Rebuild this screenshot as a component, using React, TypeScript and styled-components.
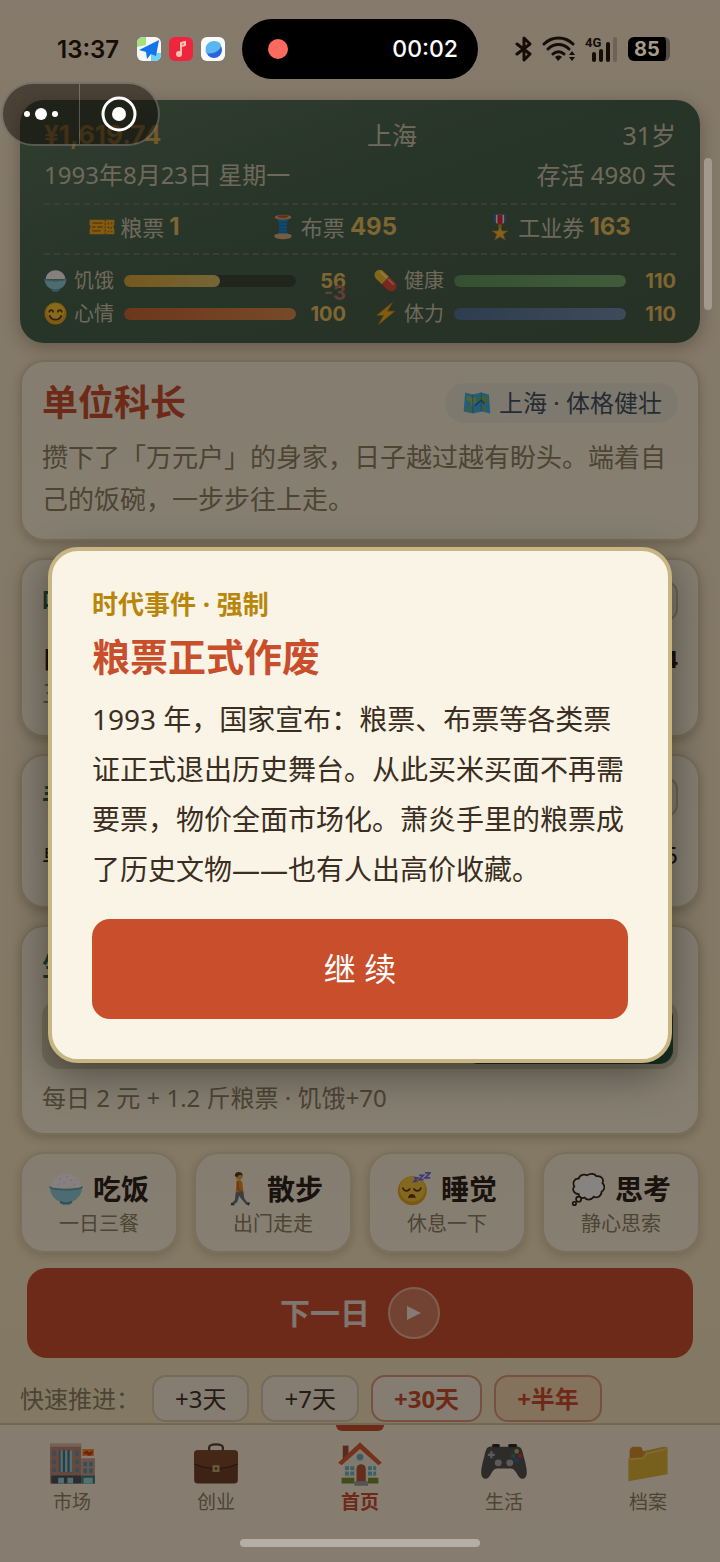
import React from 'react';
import styled, { createGlobalStyle } from 'styled-components';

const GlobalStyle = createGlobalStyle`
    * {
        box-sizing: border-box;
    }
    body {
        margin: 0;
        background: #efdcb8;
        color: #2e2118;
        font-family: 'Noto Sans', 'Noto Sans CJK SC', sans-serif;
        font-size: 24px;
    }
    button {
        font-family: inherit;
        color: inherit;
        cursor: pointer;
    }
    h1, h2, h3, p {
        margin: 0;
    }
`;

/* ---------- icons ---------- */

type IconName =
    | 'ticket' | 'spool' | 'medal' | 'rice' | 'smile' | 'pill' | 'bolt' | 'map'
    | 'walk' | 'sleep' | 'thought' | 'store' | 'case' | 'house' | 'pad' | 'folder';

const drawings: Record<IconName, React.ReactNode> = {
    ticket: (
        <>
            <path d="M1 9h38v8c-2 1-2 5 0 6v8H1v-8c2-1 2-5 0-6z" fill="#f0a51f" />
            <path d="M5 14h16M5 20h5M13 20h8M5 26h13" stroke="#9b6515" strokeWidth="2" />
            <path d="M25 9v22" stroke="#9b6515" strokeWidth="2" strokeDasharray="3 2" />
            <path d="M30 13v3M35 13v3M30 19v3M34 20v3M30 26v2M35 26v2" stroke="#9b6515" strokeWidth="2" />
        </>
    ),
    spool: (
        <>
            <path d="M11 8h18l-3 6v12l3 7H11l3-7V14z" fill="#2287c4" />
            <path d="M13 13h14M13 18h14M13 23h14M13 28h14" stroke="#17679c" strokeWidth="1" />
            <ellipse cx="20" cy="5" rx="13" ry="4" fill="#d99b66" />
            <ellipse cx="20" cy="4" rx="8" ry="2" fill="#b5543a" />
            <path d="M7 33c0-4 26-4 26 0v2c0 5-26 5-26 0z" fill="#d7a878" />
        </>
    ),
    medal: (
        <>
            <path d="M11 1h18v11l-9 5-9-5z" fill="#3b72b8" />
            <path d="M14 1h12v13l-6 3-6-3z" fill="#f2e8e0" />
            <path d="M16 1h8v14l-4 2-4-2z" fill="#d32f3c" />
            <circle cx="20" cy="19" r="3" fill="#c48b2c" />
            <path d="M20 18l3 8h9l-7 5 3 9-8-5-8 5 3-9-7-5h9z" fill="#f0b13a" stroke="#bf8120" strokeWidth="1" />
        </>
    ),
    rice: (
        <>
            <path d="M3 18C3 7 13 2 20 2s17 5 17 16z" fill="#f4ecea" />
            <path d="M12 8l2 1M20 5l2 1M25 10l2-1M17 12l2 1M29 15l2-1M10 15l2-1M31 9l1 1" stroke="#c6b8b6" strokeWidth="1" />
            <path d="M1 17c0 4 38 4 38 0 0 9-5 15-12 18v2c-3 3-11 3-14 0v-2C6 32 1 26 1 17z" fill="#8cc5cf" />
            <path d="M1 17c0 5 38 5 38 0" fill="none" stroke="#5da2b0" strokeWidth="2" />
            <path d="M13 35c4 2 10 2 14 0" fill="none" stroke="#4c8d9d" strokeWidth="2" />
        </>
    ),
    smile: (
        <>
            <circle cx="20" cy="20" r="19" fill="#e9a51e" />
            <circle cx="20" cy="17" r="15" fill="#f7c331" />
            <path d="M9 17c1-4 6-4 7 0M24 17c1-4 6-4 7 0M10 24c4 9 16 9 20 0" fill="none" stroke="#623813" strokeWidth="3" strokeLinecap="round" />
        </>
    ),
    pill: (
        <g transform="rotate(44 20 20)">
            <path d="M20 11H6a9 9 0 0 0 0 18h14z" fill="#f1bb32" />
            <path d="M20 11h14a9 9 0 0 1 0 18H20z" fill="#df4a37" />
            <path d="M4 15h14" stroke="#fae48e" strokeWidth="3" strokeLinecap="round" />
            <path d="M23 15h11" stroke="#f59a87" strokeWidth="3" strokeLinecap="round" />
        </g>
    ),
    bolt: <path d="M32 1L5 23h12L8 39l28-23H23z" fill="#f3a71e" stroke="#d48616" strokeWidth="1" />,
    map: (
        <>
            <path d="M3 5l11 3 12-3 11 3 2 27-12-3-13 3-13-3z" fill="#46a9d8" />
            <path d="M6 9l7 4 5-2 1 7-6 8-3-8-5-2z" fill="#92bd57" />
            <path d="M24 9l11 3 1 7-7 3-4-4-4 2zM26 25l7 1v5l-5-1zM5 28l6-2 3 5-8 1z" fill="#78af4b" />
            <path d="M14 8v26M26 5v27" stroke="#2b76a8" strokeWidth="1" />
            <path d="M17 24l9-8 5 5" fill="none" stroke="#2f5fbb" strokeWidth="2" />
        </>
    ),
    walk: (
        <>
            <circle cx="19" cy="5" r="4" fill="#d99b35" />
            <path d="M14 5c-1-7 10-6 9-1-2-1-5-1-6 2z" fill="#5b3b23" />
            <path d="M16 10c5-2 7 1 7 5l1 9-9 1z" fill="#e68323" />
            <path d="M15 24l9-1 1 8 5 7-2 1-7-8-2-3-2 7-5 4-2-2 4-4z" fill="#68717c" />
            <path d="M17 12l1 8 4 4" fill="none" stroke="#bf6818" strokeWidth="2" />
            <path d="M10 36l4 3H9zM28 36l4 0-2 4z" fill="#3d434a" />
        </>
    ),
    sleep: (
        <>
            <circle cx="18" cy="22" r="17" fill="#dfa323" />
            <circle cx="18" cy="20" r="15" fill="#f0bd35" />
            <path d="M7 19c1 4 6 4 8 1M20 20c2 3 7 3 8-1" fill="none" stroke="#623813" strokeWidth="2" strokeLinecap="round" />
            <path d="M13 31c0-7 9-7 9 0-2-1-7-1-9 0z" fill="#623813" />
            <path d="M20 7h4l-4 4h4M26 4h5l-5 5h5M33 1h6l-6 6h6" fill="none" stroke="#6a6ce0" strokeWidth="2" />
        </>
    ),
    thought: (
        <g fill="#f5efeb" stroke="#332318" strokeWidth="2">
            <path d="M9 26c-6 0-8-6-5-9-3-5 1-10 5-9 1-5 7-6 10-4 4-3 9-2 11 1 6-1 9 4 7 8 4 4 2 9-1 10 0 6-6 8-9 6-4 5-9 4-11 1-4 2-7-1-7-4z" />
            <circle cx="9" cy="32" r="3" />
            <circle cx="4" cy="37" r="2" />
        </g>
    ),
    store: (
        <>
            <path d="M1 3h27v34H1z" fill="#b98372" />
            <path d="M1 2h27v3H1z" fill="#d6b49d" />
            <path d="M9 8h11v19H9z" fill="#536c79" />
            <path d="M11 8v19M15 8v19M19 8v19" stroke="#9acbd0" strokeWidth="2" />
            <path d="M3 9h3v4H3zM3 16h3v4H3zM3 23h3v4H3zM23 9h3v4h-3zM23 16h3v4h-3zM23 23h3v4h-3z" fill="#698c9d" />
            <path d="M2 30h26v7H2z" fill="#4d5357" />
            <path d="M8 32h5v5H8zM16 32h5v5h-5z" fill="#94cad0" />
            <path d="M28 15h12v22H28z" fill="#c79785" />
            <path d="M30 18h3v4h-3zM35 18h3v4h-3zM30 24h3v4h-3zM35 24h3v4h-3z" fill="#4f94aa" />
            <path d="M29 7h10v6H29z" fill="#ee8e20" />
            <path d="M30 10l3-2 2 2 3-2v3l-3 2-3-2-2 1z" fill="#d73928" />
            <path d="M28 30h12v7H28z" fill="#477b77" />
            <path d="M30 32h8v5h-8z" fill="#91d0d0" />
        </>
    ),
    case: (
        <>
            <path d="M14 9V6c0-4 12-4 12 0v3" fill="none" stroke="#594536" strokeWidth="2" />
            <rect x="1" y="8" width="38" height="29" rx="3" fill="#704028" />
            <path d="M1 11c0-2 1-3 3-3h32c2 0 3 1 3 3v9c-12 6-26 6-38 0z" fill="#7e472b" />
            <path d="M1 20c12 5 26 5 38 0" fill="none" stroke="#482514" strokeWidth="1" />
            <path d="M17 21h6v6h-6z" fill="#c4a466" />
            <path d="M19 23h2v2h-2z" fill="#5c3921" />
        </>
    ),
    house: (
        <>
            <path d="M5 4h5v13H5z" fill="#9c4f36" />
            <path d="M6 19L21 6l13 13v17H6z" fill="#e9dfc9" />
            <path d="M20 1L1 19l3 2L20 7l16 14 3-2z" fill="#d45c33" />
            <circle cx="20" cy="14" r="3" fill="#73a5b5" />
            <path d="M17 36V24c0-5 8-5 8 0v12z" fill="#b95434" />
            <path d="M7 22h8v8H7zM27 22h7v8h-7z" fill="#6aafbd" />
            <path d="M11 22v8M7 26h8M31 22v8M27 26h7" stroke="#f3e9d8" strokeWidth="1" />
            <path d="M4 32h11v5H4zM27 32h9v5h-9z" fill="#758b2f" />
            <path d="M15 35h12v4H15z" fill="#9b9a9a" />
        </>
    ),
    pad: (
        <>
            <path d="M10 5h20c5-1 6 3 7 8 2 7 4 15 2 18-3 4-6 1-8-3-2-3-3-4-6-4H15c-3 0-4 1-6 4-2 4-5 7-8 3-2-3 0-11 2-18 1-5 2-9 7-8z" fill="#55504f" />
            <path d="M11 4h4M25 4h5" stroke="#2c2929" strokeWidth="3" strokeLinecap="round" />
            <path d="M9 9v6M6 12h6" stroke="#aaa4a1" strokeWidth="2" />
            <circle cx="15" cy="19" r="3" fill="#a9a29e" />
            <circle cx="25" cy="19" r="3" fill="#a9a29e" />
            <circle cx="31" cy="9" r="2" fill="#b3af5c" />
            <circle cx="34" cy="13" r="2" fill="#c13a3a" />
            <circle cx="28" cy="13" r="2" fill="#258370" />
            <circle cx="31" cy="17" r="2" fill="#37639c" />
        </>
    ),
    folder: (
        <>
            <path d="M4 10c0-3 1-5 4-5h5c2 0 2 3 3 4l18-4v8L4 35z" fill="#d28b2d" />
            <path d="M3 15l12-1 3-5 17-4c2 0 2 1 2 2v22L3 35z" fill="#d9ad38" />
            <path d="M4 16l12-1 3-4 17-4" fill="none" stroke="#f0cb64" strokeWidth="1" />
        </>
    ),
};

const Svg = styled.svg<{ $size: number }>`
    display: block;
    flex: none;
    width: ${(p) => p.$size}px;
    height: ${(p) => p.$size}px;
`;

const Icon = ({ name, size }: { name: IconName, size: number }) => (
    <Svg $size={size} viewBox="0 0 40 40" aria-hidden="true">{drawings[name]}</Svg>
);

/* ---------- phone chrome ---------- */

const StatusBar = () => (
    <StatusRow>
        <StatusSide>
            <Clock>13:37</Clock>
            <Svg $size={24} viewBox="0 0 24 24" aria-hidden="true">
                <rect width="24" height="24" rx="6" fill="#f5f7f6" />
                <path d="M0 10V6a6 6 0 0 1 6-6h3v8z" fill="#a4e07f" />
                <path d="M14 16h10v2a6 6 0 0 1-6 6h-4z" fill="#70d2f4" />
                <path d="M22 3L2 13l7 2 1 7 4-5 5 2z" fill="#1375e8" />
            </Svg>
            <Svg $size={24} viewBox="0 0 24 24" aria-hidden="true">
                <rect width="24" height="24" rx="6" fill="#ef2540" />
                <path d="M12 17V6l4-1v3l-3 1" fill="none" stroke="#fbc5ad" strokeWidth="2" />
                <circle cx="10" cy="17" r="3" fill="#fbc5ad" />
            </Svg>
            <Svg $size={24} viewBox="0 0 24 24" aria-hidden="true">
                <rect width="24" height="24" rx="6" fill="#fafafa" />
                <circle cx="13" cy="13" r="8" fill="#2865dd" />
                <path d="M5 16C3 8 8 4 13 4c5 0 7 3 7 5-1 5-9 9-15 7z" fill="#59b7ef" />
            </Svg>
        </StatusSide>
        <Island>
            <RecordDot />
            <span>00:02</span>
        </Island>
        <StatusSide $end>
            <svg width="18" height="26" viewBox="0 0 18 26" aria-hidden="true">
                <path d="M2 8l13 10-6 6V2l6 6L2 18" fill="none" stroke="#150d06" strokeWidth="3" strokeLinejoin="round" strokeLinecap="round" />
            </svg>
            <svg width="34" height="26" viewBox="0 0 34 26" aria-hidden="true">
                <g fill="none" stroke="#150d06" strokeWidth="3" strokeLinecap="round">
                    <path d="M2 8c8-8 21-8 29 0M6 13c6-6 15-6 21 0M11 18c3-3 8-3 11 0" />
                </g>
                <path d="M13 21c2-2 5-2 7 0l-4 4z" fill="#150d06" />
                <path d="M27 19l3-4 3 4zM27 21h6l-3 4z" fill="#150d06" />
            </svg>
            <svg width="34" height="26" viewBox="0 0 34 26" aria-hidden="true">
                <text x="0" y="11" fontSize="13" fontWeight="700" fontFamily="Roboto, sans-serif" fill="#150d06">4G</text>
                <path d="M9 18v6M16 15v9M23 8v16" stroke="#150d06" strokeWidth="4" strokeLinecap="round" />
                <path d="M30 3v21" stroke="#6d6253" strokeWidth="4" strokeLinecap="round" />
            </svg>
            <Battery>85</Battery>
        </StatusSide>
    </StatusRow>
);

const StatusRow = styled.header`
    position: relative;
    z-index: 3;
    display: grid;
    grid-template-columns: 1fr 236px 1fr;
    align-items: center;
    height: 100px;
    padding: 0 50px 2px;
`;

const StatusSide = styled.div<{ $end?: boolean }>`
    display: flex;
    align-items: center;
    justify-content: ${(p) => (p.$end ? 'flex-end' : 'flex-start')};
    gap: ${(p) => (p.$end ? 9 : 8)}px;
`;

const Clock = styled.time`
    margin: 0 10px 0 7px;
    color: #150d06;
    font: 600 24px Inter, sans-serif;
`;

const Island = styled.div`
    display: flex;
    align-items: center;
    justify-content: space-between;
    height: 60px;
    padding: 0 20px 0 26px;
    border-radius: 30px;
    background: #000;
    color: #fff;
    font: 500 23px Inter, sans-serif;
`;

const RecordDot = styled.i`
    width: 20px;
    height: 20px;
    border-radius: 50%;
    background: #ff6a5f;
`;

const Battery = styled.span`
    width: 42px;
    border-radius: 6px;
    border-right: 4px solid #564c40;
    background: #000;
    color: #a79c8a;
    font: 700 20px/24px Inter, sans-serif;
    text-align: center;
`;

const Capsule = styled.div`
    position: absolute;
    z-index: 3;
    top: 82px;
    left: 1px;
    display: grid;
    grid-template-columns: 76px 1fr;
    width: 159px;
    height: 64px;
    border: 2px solid rgba(255, 255, 255, 0.25);
    border-radius: 32px;
    background: rgba(15, 8, 4, 0.5);
`;

const CapsuleButton = styled.button`
    display: grid;
    place-items: center;
    padding: 0;
    border: 0;
    background: none;

    & + & {
        border-left: 1px solid rgba(255, 255, 255, 0.25);
    }
`;

const ScrollThumb = styled.i`
    position: absolute;
    z-index: 3;
    top: 158px;
    right: 8px;
    width: 8px;
    height: 152px;
    border-radius: 4px;
    background: #a3998d;
`;

const HomeBar = styled.i`
    position: relative;
    z-index: 3;
    align-self: center;
    width: 240px;
    height: 8px;
    margin-bottom: 15px;
    border-radius: 4px;
    background: #b4aea5;
`;

/* ---------- page ---------- */

const Page = styled.div`
    position: relative;
    display: flex;
    flex-direction: column;
    min-height: 100vh;
    background: linear-gradient(#f2dfc3, #efdbb3);
`;

const Content = styled.main`
    display: flex;
    flex: 1;
    flex-direction: column;
    gap: 17px;
    padding: 0 20px;
`;

const Summary = styled.section`
    padding: 15px 24px 13px;
    border-radius: 24px;
    background: linear-gradient(160deg, #587157, #48604a 45%, #475b44);
    box-shadow: 0 4px 18px rgba(60, 40, 20, 0.35);
    color: #c9c0a6;
`;

const SummaryRow = styled.div<{ $size: number }>`
    display: flex;
    align-items: center;
    justify-content: space-between;
    height: 40px;
    font-size: ${(p) => p.$size}px;
    line-height: 40px;
    white-space: nowrap;
`;

const Money = styled.strong`
    color: #d6a14a;
    font-family: Inter, sans-serif;
    font-size: 26px;
`;

const Tickets = styled.div`
    display: flex;
    justify-content: space-around;
    height: 52px;
    margin-top: 8px;
    padding-bottom: 4px;
    border: dashed #69765b;
    border-width: 2px 0;
`;

const Ticket = styled.div`
    display: flex;
    align-items: center;
    gap: 5px;
    font-size: 22px;
    line-height: 32px;
`;

const Amount = styled.strong`
    color: #e6ba5c;
    font-family: Inter, sans-serif;
    font-size: 24px;
`;

const Stats = styled.div`
    display: grid;
    grid-template-columns: 1fr 1fr;
    gap: 0 28px;
    padding-top: 9px;
`;

const Stat = styled.div`
    display: grid;
    grid-template-columns: 24px 40px 1fr 40px;
    align-items: center;
    gap: 6px;
    height: 33px;
    font-size: 20px;
    line-height: 32px;
`;

const Meter = styled.div`
    height: 12px;
    margin: 0 4px;
    border-radius: 6px;
    background: #3d4536;
`;

const MeterFill = styled.div<{ $from: string, $to: string }>`
    height: 100%;
    border-radius: 6px;
    background: linear-gradient(90deg, ${(p) => p.$from}, ${(p) => p.$to});
`;

const StatValue = styled.strong`
    position: relative;
    color: #e6ba5c;
    font-family: Inter, sans-serif;
    font-size: 20px;
    text-align: right;
`;

const Delta = styled.span`
    position: absolute;
    top: 12px;
    right: 0;
    color: #b8705f;
`;

const Card = styled.section<{ $min?: number }>`
    min-height: ${(p) => p.$min || 0}px;
    padding: 20px 20px 18px;
    border: 2px solid #d8c6a2;
    border-radius: 24px;
    background: linear-gradient(#f2e3cd, #f5e7ce);
    box-shadow: 0 3px 10px rgba(80, 55, 20, 0.25);
`;

const CardHead = styled.div`
    display: flex;
    align-items: center;
    justify-content: space-between;
    height: 42px;
`;

const Rank = styled.h1`
    color: #c84e2c;
    font-size: 36px;
    line-height: 40px;
`;

const Place = styled.span`
    display: flex;
    align-items: center;
    gap: 8px;
    padding: 0 16px 0 18px;
    border-radius: 20px;
    background: #e5dccb;
    color: #45505d;
    line-height: 40px;
`;

const Story = styled.p`
    padding: 12px 0 1px;
    color: #8c7c60;
    font-size: 26px;
    line-height: 42px;
`;

const CardTitle = styled.h2`
    color: #2f6349;
    font-size: 26px;
    line-height: 38px;
`;

const SmallButton = styled.button`
    height: 40px;
    padding: 0 16px;
    border: 2px solid #c5b492;
    border-radius: 12px;
    background: #eadbc3;
    font-size: 22px;
`;

const Line = styled.div<{ $bold?: boolean }>`
    display: flex;
    justify-content: space-between;
    padding-top: 20px;
    font-size: 24px;
    font-weight: ${(p) => (p.$bold ? 700 : 400)};
    line-height: 34px;
`;

const Muted = styled.p`
    color: #8c7c60;
    font-size: 24px;
    line-height: 34px;
`;

const Segments = styled.div`
    display: grid;
    grid-template-columns: repeat(3, 1fr);
    height: 70px;
    margin: 14px 0 12px;
    padding: 5px;
    border-radius: 18px;
    background: #d5c7a9;
`;

const Segment = styled.button<{ $on?: boolean }>`
    border: 0;
    border-radius: 14px;
    background: ${(p) => (p.$on ? '#2f5a42' : 'none')};
    color: ${(p) => (p.$on ? '#fff' : 'inherit')};
    font-size: 24px;
`;

const Actions = styled.div`
    display: grid;
    grid-template-columns: repeat(4, 1fr);
    gap: 16px;
`;

const Action = styled.button`
    height: 101px;
    padding: 2px 0 0;
    border: 2px solid #dccba8;
    border-radius: 24px;
    background: linear-gradient(#f2e3cd, #f5e7cf);
    box-shadow: 0 3px 8px rgba(80, 55, 20, 0.2);
`;

const ActionName = styled.span`
    display: flex;
    align-items: center;
    justify-content: center;
    gap: 10px;
    font-size: 28px;
    font-weight: 700;
    line-height: 40px;
`;

const ActionHint = styled.span`
    display: block;
    color: #8c7c60;
    font-size: 20px;
    line-height: 30px;
`;

const NextDay = styled.button`
    display: flex;
    align-items: center;
    justify-content: center;
    gap: 18px;
    height: 90px;
    margin: -2px 7px 0;
    border: 0;
    border-radius: 20px;
    background: #c84e2c;
    color: #e8d8cb;
    font-size: 30px;
    font-weight: 700;
    line-height: 44px;
`;

const PlayRing = styled.span`
    display: grid;
    place-items: center;
    width: 52px;
    height: 52px;
    border: 2px solid #e5ac94;
    border-radius: 50%;
    background: #d0785b;
`;

const Quick = styled.div`
    display: flex;
    align-items: center;
    gap: 12px;
    color: #8c7c60;
    line-height: 47px;
`;

const QuickLabel = styled.span`
    width: 120px;
    white-space: nowrap;
`;

const Chip = styled.button<{ $hot?: boolean, $filled?: boolean }>`
    height: 47px;
    padding: 0 21px;
    border: 2px solid ${(p) => (p.$hot ? '#d99377' : '#d3c3a4')};
    border-radius: 14px;
    background: ${(p) => (p.$filled ? '#f2d0aa' : '#f2e3d0')};
    color: ${(p) => (p.$hot ? '#c84e2c' : '#423426')};
    font-size: 24px;
    font-weight: ${(p) => (p.$hot ? 700 : 400)};
    line-height: 40px;
`;

const Shell = styled.footer`
    display: flex;
    flex-direction: column;
    background: #f4e3cd;
`;

const TabBar = styled.nav`
    display: grid;
    grid-template-columns: repeat(5, 1fr);
    height: 116px;
    border-top: 2px solid #d0bd98;
`;

const Tab = styled.a<{ $on?: boolean }>`
    display: flex;
    flex-direction: column;
    align-items: center;
    color: ${(p) => (p.$on ? '#c84e2c' : '#8c7c60')};
    font-size: 19px;
    font-weight: ${(p) => (p.$on ? 700 : 400)};
    line-height: 30px;
    text-decoration: none;

    &::before {
        content: '';
        width: 48px;
        height: 6px;
        margin-bottom: 10px;
        border-radius: 0 0 6px 6px;
        background: ${(p) => (p.$on ? '#c84e2c' : 'none')};
    }
`;

/* ---------- modal ---------- */

const Backdrop = styled.div`
    position: absolute;
    z-index: 2;
    inset: 0;
    display: flex;
    align-items: center;
    padding: 48px 48px 0;
    background: rgba(0, 0, 0, 0.45);
`;

const Dialog = styled.div`
    flex: 1;
    padding: 35px 40px 40px;
    border: 4px solid #c7b682;
    border-radius: 30px;
    background: #faf4e6;
    box-shadow: 0 12px 40px rgba(0, 0, 0, 0.4);
`;

const Kicker = styled.p`
    color: #b8860b;
    font-size: 26px;
    font-weight: 700;
    line-height: 36px;
`;

const EventTitle = styled.h2`
    padding: 6px 0 10px;
    color: #c84e2c;
    font-size: 38px;
    line-height: 56px;
`;

const EventText = styled.p`
    color: #3a2e22;
    font-size: 28px;
    line-height: 50px;
`;

const Continue = styled.button`
    display: block;
    width: 100%;
    height: 100px;
    margin-top: 25px;
    border: 0;
    border-radius: 18px;
    background: #c84e2c;
    color: #fff;
    font-size: 32px;
    line-height: 48px;
`;

const stats: { icon: IconName, name: string, value: number, from: string, to: string, delta?: string }[] = [
    { icon: 'rice', name: '饥饿', value: 56, from: '#d4a336', to: '#d8b862', delta: '-3' },
    { icon: 'pill', name: '健康', value: 110, from: '#62925a', to: '#78a86c' },
    { icon: 'smile', name: '心情', value: 100, from: '#c86434', to: '#d8874a' },
    { icon: 'bolt', name: '体力', value: 110, from: '#556f92', to: '#7088a6' },
];

const tickets: { icon: IconName, name: string, count: number }[] = [
    { icon: 'ticket', name: '粮票', count: 1 },
    { icon: 'spool', name: '布票', count: 495 },
    { icon: 'medal', name: '工业券', count: 163 },
];

const actions: { icon: IconName, name: string, hint: string }[] = [
    { icon: 'rice', name: '吃饭', hint: '一日三餐' },
    { icon: 'walk', name: '散步', hint: '出门走走' },
    { icon: 'sleep', name: '睡觉', hint: '休息一下' },
    { icon: 'thought', name: '思考', hint: '静心思索' },
];

const tabs: { icon: IconName, name: string }[] = [
    { icon: 'store', name: '市场' },
    { icon: 'case', name: '创业' },
    { icon: 'house', name: '首页' },
    { icon: 'pad', name: '生活' },
    { icon: 'folder', name: '档案' },
];

const App = () => (
    <Page>
        <GlobalStyle />
        <StatusBar />
        <Capsule>
            <CapsuleButton aria-label="更多">
                <svg width="36" height="14" viewBox="0 0 36 14" fill="#fff">
                    <circle cx="4" cy="7" r="3" />
                    <circle cx="18" cy="7" r="6" />
                    <circle cx="32" cy="7" r="3" />
                </svg>
            </CapsuleButton>
            <CapsuleButton aria-label="关闭">
                <svg width="36" height="36" viewBox="0 0 36 36" fill="#fff">
                    <circle cx="18" cy="18" r="16" fill="none" stroke="#fff" strokeWidth="3" />
                    <circle cx="18" cy="18" r="7" />
                </svg>
            </CapsuleButton>
        </Capsule>
        <ScrollThumb />
        <Content>
            <Summary>
                <SummaryRow $size={25}>
                    <Money>¥1,619.74</Money>
                    <span>上海</span>
                    <span>31岁</span>
                </SummaryRow>
                <SummaryRow $size={24}>
                    <span>1993年8月23日 星期一</span>
                    <span>存活 4980 天</span>
                </SummaryRow>
                <Tickets>
                    {tickets.map((t) => (
                        <Ticket key={t.name}>
                            <Icon name={t.icon} size={26} />
                            {t.name}
                            <Amount>{t.count}</Amount>
                        </Ticket>
                    ))}
                </Tickets>
                <Stats>
                    {stats.map((s) => (
                        <Stat key={s.name}>
                            <Icon name={s.icon} size={23} />
                            <span>{s.name}</span>
                            <Meter>
                                <MeterFill $from={s.from} $to={s.to} style={{ width: `${Math.min(s.value, 100)}%` }} />
                            </Meter>
                            <StatValue>
                                {s.value}
                                {s.delta && <Delta>{s.delta}</Delta>}
                            </StatValue>
                        </Stat>
                    ))}
                </Stats>
            </Summary>

            <Card>
                <CardHead>
                    <Rank>单位科长</Rank>
                    <Place>
                        <Icon name="map" size={28} />
                        上海 · 体格健壮
                    </Place>
                </CardHead>
                <Story>攒下了「万元户」的身家，日子越过越有盼头。端着自己的饭碗，一步步往上走。</Story>
            </Card>

            <Card $min={179}>
                <CardHead>
                    <CardTitle>吃住</CardTitle>
                    <SmallButton>更换</SmallButton>
                </CardHead>
                <Line $bold>
                    <span>日常</span>
                    <span>4</span>
                </Line>
                <Muted>三餐</Muted>
            </Card>

            <Card $min={154}>
                <CardHead>
                    <CardTitle>手头</CardTitle>
                    <SmallButton>查看</SmallButton>
                </CardHead>
                <Line>
                    <span>单位</span>
                    <span>5</span>
                </Line>
            </Card>

            <Card>
                <CardTitle>生活</CardTitle>
                <Segments>
                    <Segment>节俭</Segment>
                    <Segment>普通</Segment>
                    <Segment $on>宽裕</Segment>
                </Segments>
                <Muted>每日 2 元 + 1.2 斤粮票 · 饥饿+70</Muted>
            </Card>

            <Actions>
                {actions.map((a) => (
                    <Action key={a.name}>
                        <ActionName>
                            <Icon name={a.icon} size={34} />
                            {a.name}
                        </ActionName>
                        <ActionHint>{a.hint}</ActionHint>
                    </Action>
                ))}
            </Actions>

            <NextDay>
                下一日
                <PlayRing>
                    <svg width="14" height="14" viewBox="0 0 14 14" fill="#f0e0d4" aria-hidden="true">
                        <path d="M0 0l14 7-14 7z" />
                    </svg>
                </PlayRing>
            </NextDay>

            <Quick>
                <QuickLabel>快速推进：</QuickLabel>
                <Chip>+3天</Chip>
                <Chip>+7天</Chip>
                <Chip $hot>+30天</Chip>
                <Chip $hot $filled>+半年</Chip>
            </Quick>
        </Content>
        <Shell>
            <TabBar>
                {tabs.map((t) => (
                    <Tab key={t.name} href="#" $on={t.name === '首页'}>
                        <Icon name={t.icon} size={46} />
                        {t.name}
                    </Tab>
                ))}
            </TabBar>
            <HomeBar />
        </Shell>

        <Backdrop>
            <Dialog role="dialog" aria-modal="true" aria-labelledby="event-title">
                <Kicker>时代事件 · 强制</Kicker>
                <EventTitle id="event-title">粮票正式作废</EventTitle>
                <EventText>
                    1993 年，国家宣布：粮票、布票等各类票证正式退出历史舞台。从此买米买面不再需要票，物价全面市场化。萧炎手里的粮票成了历史文物——也有人出高价收藏。
                </EventText>
                <Continue>继 续</Continue>
            </Dialog>
        </Backdrop>
    </Page>
);

export default App;
